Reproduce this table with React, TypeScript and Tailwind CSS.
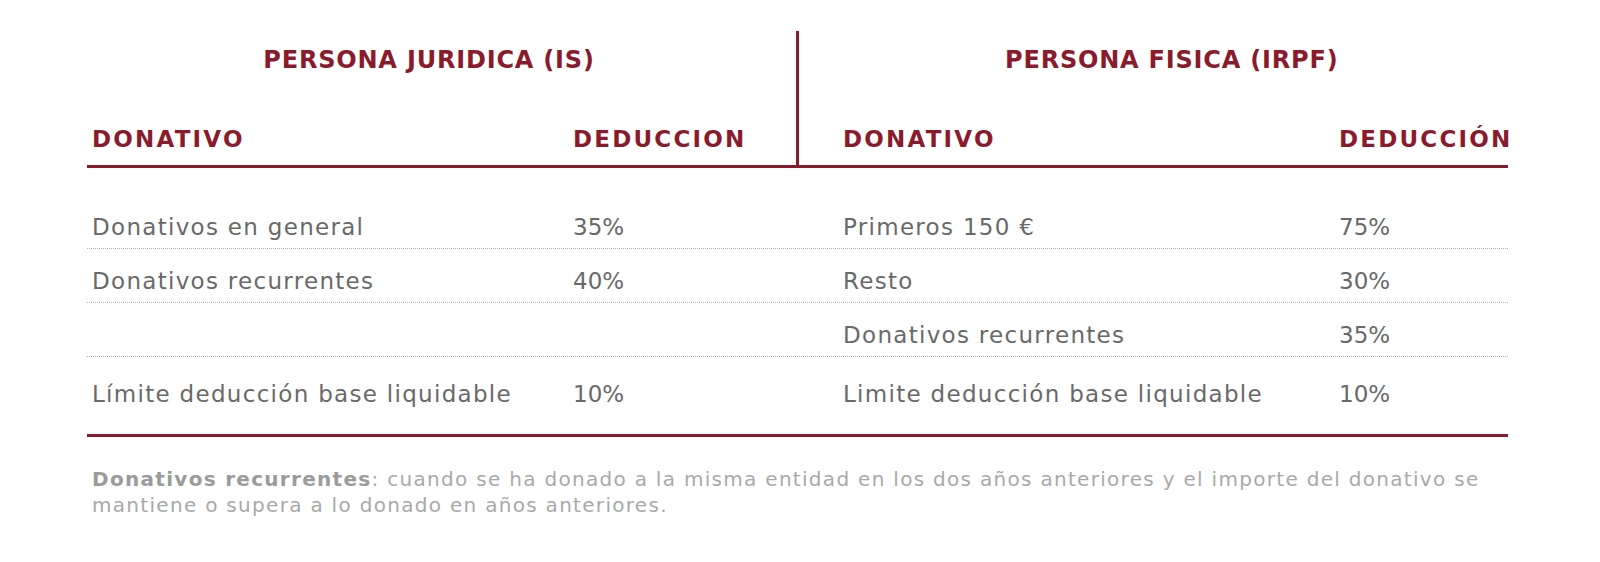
const font = "font-['DejaVu_Sans','Liberation_Sans',sans-serif]";

interface Row {
  label: string;
  value: string;
}

const juridica: Row[] = [
  { label: 'Donativos en general', value: '35%' },
  { label: 'Donativos recurrentes', value: '40%' },
  { label: '', value: '' },
  { label: 'Límite deducción base liquidable', value: '10%' },
];

const fisica: Row[] = [
  { label: 'Primeros 150 €', value: '75%' },
  { label: 'Resto', value: '30%' },
  { label: 'Donativos recurrentes', value: '35%' },
  { label: 'Limite deducción base liquidable', value: '10%' },
];

export default function App() {
  return (
    <div className={`w-[1600px] h-[562px] bg-white ${font}`}>
      <div className="ml-[87px] w-[1421px] pt-[31px]">
        {/* Cabecera */}
        <div className="flex border-b-[3px] border-[#8a1b2d] text-[#8a1b2d] font-bold">
          <div className="w-[709px] shrink-0">
            <div className="pt-[14px] pr-[25px] text-center text-[24px] leading-[30px] tracking-[0.8px]">
              PERSONA JURIDICA (IS)
            </div>
            <div className="mt-[49px] pb-[11px] grid grid-cols-[486px_1fr] text-[23px] leading-[30px] tracking-[2.2px]">
              <span className="pl-[5px]">DONATIVO</span>
              <span>DEDUCCION</span>
            </div>
          </div>
          <div className="flex-1 border-l-[3px] border-[#8a1b2d]">
            <div className="pt-[14px] pl-[32px] text-center text-[24px] leading-[30px] tracking-[0.8px]">
              PERSONA FISICA (IRPF)
            </div>
            <div className="mt-[49px] pb-[11px] pl-[44px] grid grid-cols-[496px_1fr] text-[23px] leading-[30px] tracking-[2.2px]">
              <span>DONATIVO</span>
              <span>DEDUCCIÓN</span>
            </div>
          </div>
        </div>

        {/* Filas */}
        <div className="mt-[27px] border-b-[3px] border-[#8a1b2d] text-[23px] leading-[30px] tracking-[1.3px] text-[#696969]">
          {juridica.map((row, i) => {
            const last = i === juridica.length - 1;
            return (
              <div
                key={i}
                className={
                  last
                    ? 'grid grid-cols-[486px_270px_496px_1fr] pt-[22px] pb-[25px]'
                    : 'grid grid-cols-[486px_270px_496px_1fr] pt-[17px] pb-[6px] border-b border-dotted border-[#b5b5b5]'
                }
              >
                <span className="pl-[5px] h-[30px]">{row.label}</span>
                <span className="tracking-normal">{row.value}</span>
                <span>{fisica[i].label}</span>
                <span className="tracking-normal">{fisica[i].value}</span>
              </div>
            );
          })}
        </div>

        {/* Nota */}
        <p className="mt-[29px] pl-[5px] text-[20px] leading-[26px] tracking-[1.3px] text-[#a9a9a9]">
          <span className="font-bold text-[#9b9b9b]">Donativos recurrentes</span>: cuando se ha donado a la misma entidad en los dos años anteriores y el importe del donativo se mantiene o supera a lo donado en años anteriores.
        </p>
      </div>
    </div>
  );
}
